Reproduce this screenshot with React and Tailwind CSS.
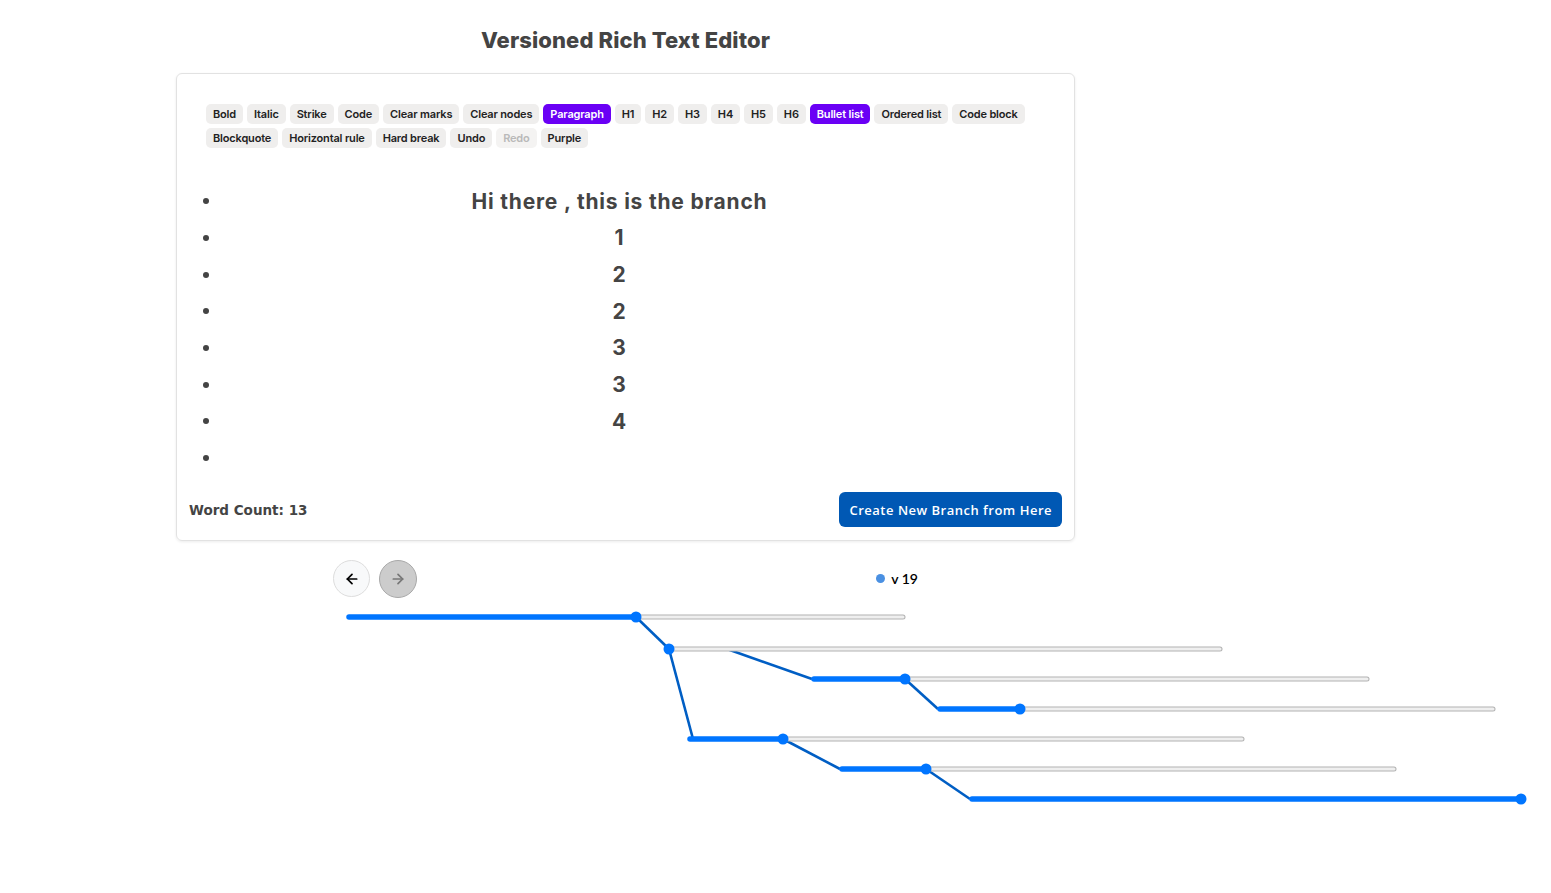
import React from 'react';
import { ArrowLeft, ArrowRight } from 'lucide-react';

const tools = [
    'Bold', 'Italic', 'Strike', 'Code', 'Clear marks', 'Clear nodes', 'Paragraph',
    'H1', 'H2', 'H3', 'H4', 'H5', 'H6', 'Bullet list', 'Ordered list', 'Code block',
    'Blockquote', 'Horizontal rule', 'Hard break', 'Undo', 'Redo', 'Purple',
];
const active = ['Paragraph', 'Bullet list'];

const items = ['Hi there , this is the branch', '1', '2', '2', '3', '3', '4', ''];

// version tree rows: track start, y, thumb x, track end
const rows = [
    { x: 347, y: 617, thumb: 636, end: 903 },
    { x: 666, y: 649, thumb: 669, end: 1220 },
    { x: 812, y: 679, thumb: 905, end: 1367 },
    { x: 938, y: 709, thumb: 1020, end: 1493 },
    { x: 688, y: 739, thumb: 783, end: 1242 },
    { x: 840, y: 769, thumb: 926, end: 1394 },
    { x: 970, y: 799, thumb: 1521, end: 1521 },
];

const links = [
    [636, 617, 669, 649],
    [727, 649, 812, 679],
    [905, 679, 938, 709],
    [669, 649, 693, 739],
    [783, 739, 840, 769],
    [926, 769, 970, 799],
];

const ToolButton = ({ label }) => {
    const isActive = active.includes(label);
    const disabled = label === 'Redo';
    let cls = 'bg-[#efeeed] text-[#222]';
    if (isActive) cls = 'bg-[#6a00f5] text-white';
    if (disabled) cls = 'bg-[#f4f3f2] text-[#b9b9b9]';
    return (
        <button className={`h-[20px] px-[7px] rounded-[5px] text-[11px] font-semibold tracking-[-0.17px] leading-none ${cls}`}>
            {label}
        </button>
    );
};

const VersionTree = () => (
    <svg width="1551" height="222" viewBox="0 598 1551 222" className="block">
        {links.map(([x1, y1, x2, y2], i) => (
            <line key={i} x1={x1} y1={y1} x2={x2} y2={y2} stroke="#005ec4" strokeWidth="2.6" />
        ))}
        {rows.map((r, i) => (
            <g key={i}>
                {r.end > r.thumb && (
                    <>
                        <line x1={r.thumb} y1={r.y} x2={r.end} y2={r.y} stroke="#b2b2b2" strokeWidth="5" strokeLinecap="round" />
                        <line x1={r.thumb} y1={r.y} x2={r.end} y2={r.y} stroke="#efefef" strokeWidth="3" strokeLinecap="round" />
                    </>
                )}
                {r.thumb > r.x + 4 && (
                    <line x1={r.x + 2} y1={r.y} x2={r.thumb} y2={r.y} stroke="#0075ff" strokeWidth="5.5" strokeLinecap="round" />
                )}
                <circle cx={r.thumb} cy={r.y} r="5.5" fill="#0075ff" />
            </g>
        ))}
    </svg>
);

export default function App() {
    return (
        <div className="min-h-screen bg-white font-['Inter',sans-serif] text-[#444]">
            <div className="ml-[176px] w-[899px]">
                <h1 className="pt-[26px] text-center text-[22px] leading-[28px] font-extrabold tracking-[0.1px] text-[#444]">
                    Versioned Rich Text Editor
                </h1>

                {/* Editor card */}
                <div className="mt-[19px] border border-[#e2e2e2] rounded-[6px] shadow-[0_1px_3px_rgba(0,0,0,0.08)]">
                    <div className="px-[29px] pt-[30px]">
                        <div className="flex flex-wrap gap-x-[4px] gap-y-[4px]">
                            {tools.map(t => <ToolButton key={t} label={t} />)}
                        </div>

                        <ul className="mt-[35px]">
                            {items.map((it, i) => (
                                <li key={i} className="h-[36.7px] flex items-center">
                                    <span className="-ml-[3px] w-[6px] h-[6px] rounded-full bg-[#444] shrink-0"></span>
                                    <span className="flex-1 text-center text-[21px] font-bold tracking-[0.8px] text-[#444] pr-[15px]">
                                        {it}
                                    </span>
                                </li>
                            ))}
                        </ul>
                    </div>

                    {/* Footer */}
                    <div className="flex items-center justify-between pl-[12px] pr-[12px] pt-[15px] pb-[13px]">
                        <span className="pt-[3px] font-['DejaVu_Sans',sans-serif] text-[13.5px] font-bold text-[#444]">
                            Word Count: 13
                        </span>
                        <button className="h-[35px] px-[10px] rounded-[6px] bg-[#0058b4] text-white font-['Open_Sans',sans-serif] text-[13px] font-semibold tracking-[0.5px] pt-[3px]">
                            Create New Branch from Here
                        </button>
                    </div>
                </div>

                {/* Version navigation */}
                <div className="mx-auto mt-[19px] w-[585px] flex items-center justify-between">
                    <div className="flex items-center gap-[9px]">
                        <button className="w-[37px] h-[37px] rounded-full bg-[#f8f9fa] border border-[#dddddd] flex items-center justify-center">
                            <ArrowLeft size={16} strokeWidth={2.6} className="text-black" />
                        </button>
                        <button className="w-[38px] h-[38px] rounded-full bg-[#cccccc] border border-[#a8a8a8] flex items-center justify-center">
                            <ArrowRight size={16} strokeWidth={2.6} className="text-[#777]" />
                        </button>
                    </div>
                    <div className="flex items-center gap-[6px] font-['Lato',sans-serif] text-[14px] font-semibold text-black">
                        <span className="w-[9px] h-[9px] rounded-full bg-[#4a90e2]"></span>
                        <span>v 19</span>
                    </div>
                </div>
            </div>

            <VersionTree />
        </div>
    );
}
